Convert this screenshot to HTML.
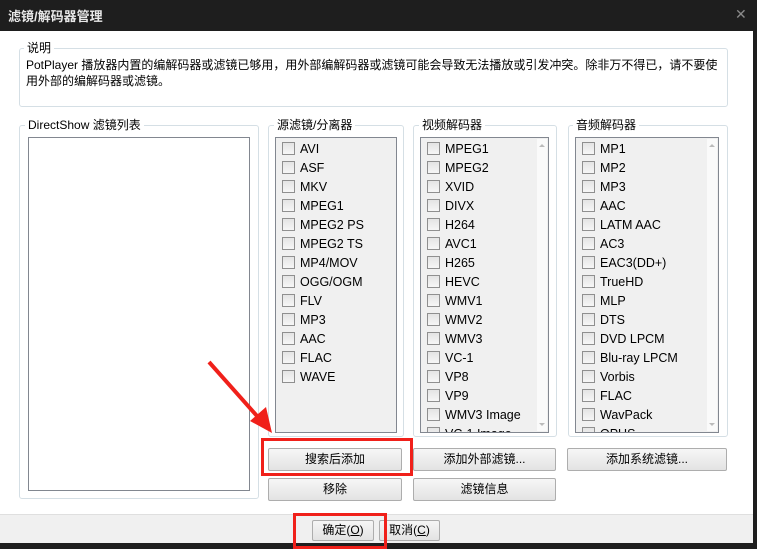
<!DOCTYPE html><html><head><meta charset="utf-8"><style>
*{box-sizing:border-box;margin:0;padding:0}
body{width:757px;height:548px;overflow:hidden;background:#1e1e1e;position:relative;font-family:"Liberation Sans","Noto Sans CJK SC",sans-serif;font-size:12px;color:#000}
.a{position:absolute}
.win{left:0;top:31px;width:753px;height:512px;background:#fff}
.title{left:8px;top:6px;color:#e8e8e8;font-size:13px;font-weight:bold}
.grp{border:1px solid #d5dfe5;border-radius:3px}
.lbl{background:#fff;padding:0 3px;font-size:12px;line-height:14px}
.list{border:1px solid #828790;background:#f0f0f0;overflow:hidden}
.row{position:absolute;left:6px;height:19px;line-height:19px;font-size:12.5px;white-space:nowrap}
.row i{display:inline-block;width:13px;height:13px;border:1px solid #8f8f8f;background:linear-gradient(#e4e4e4,#f6f6f6);vertical-align:-2px;margin-right:5px}
.sb{position:absolute;right:1px;top:1px;width:10px;bottom:1px;background:#fafafa}
.sb b{position:absolute;left:2px;width:0;height:0;border-left:3px solid transparent;border-right:3px solid transparent}
.btn{border:1px solid #adadad;background:linear-gradient(#f6f6f6,#e3e3e3);border-radius:2px;text-align:center;line-height:20px;font-size:12px}
.red{border:3px solid #f0201a}
</style></head><body>
<div class="a title">滤镜/解码器管理</div>
<div class="a" style="left:735px;top:6px;color:#8a8a8a;font-size:14px">✕</div>
<div class="a win"></div>
<div class="a grp" style="left:19px;top:48px;width:709px;height:59px"></div>
<div class="a lbl" style="left:24px;top:41px">说明</div>
<div class="a" style="left:26px;top:57px;line-height:16px;font-size:12px;white-space:nowrap">PotPlayer 播放器内置的编解码器或滤镜已够用，用外部编解码器或滤镜可能会导致无法播放或引发冲突。除非万不得已，请不要使<br>用外部的编解码器或滤镜。</div>

<div class="a grp" style="left:19px;top:125px;width:240px;height:374px"></div>
<div class="a lbl" style="left:25px;top:118px">DirectShow 滤镜列表</div>
<div class="a" style="left:28px;top:137px;width:222px;height:354px;border:1px solid #828790"></div>

<div class="a grp" style="left:268px;top:125px;width:136px;height:312px"></div>
<div class="a lbl" style="left:274px;top:118px">源滤镜/分离器</div>
<div class="a list" style="left:275px;top:137px;width:122px;height:296px">
<div class="row" style="top:2px"><i></i>AVI</div><div class="row" style="top:21px"><i></i>ASF</div><div class="row" style="top:40px"><i></i>MKV</div><div class="row" style="top:59px"><i></i>MPEG1</div><div class="row" style="top:78px"><i></i>MPEG2 PS</div><div class="row" style="top:97px"><i></i>MPEG2 TS</div><div class="row" style="top:116px"><i></i>MP4/MOV</div><div class="row" style="top:135px"><i></i>OGG/OGM</div><div class="row" style="top:154px"><i></i>FLV</div><div class="row" style="top:173px"><i></i>MP3</div><div class="row" style="top:192px"><i></i>AAC</div><div class="row" style="top:211px"><i></i>FLAC</div><div class="row" style="top:230px"><i></i>WAVE</div>
</div>

<div class="a grp" style="left:413px;top:125px;width:144px;height:312px"></div>
<div class="a lbl" style="left:419px;top:118px">视频解码器</div>
<div class="a list" style="left:420px;top:137px;width:129px;height:296px">
<div class="row" style="top:2px"><i></i>MPEG1</div><div class="row" style="top:21px"><i></i>MPEG2</div><div class="row" style="top:40px"><i></i>XVID</div><div class="row" style="top:59px"><i></i>DIVX</div><div class="row" style="top:78px"><i></i>H264</div><div class="row" style="top:97px"><i></i>AVC1</div><div class="row" style="top:116px"><i></i>H265</div><div class="row" style="top:135px"><i></i>HEVC</div><div class="row" style="top:154px"><i></i>WMV1</div><div class="row" style="top:173px"><i></i>WMV2</div><div class="row" style="top:192px"><i></i>WMV3</div><div class="row" style="top:211px"><i></i>VC-1</div><div class="row" style="top:230px"><i></i>VP8</div><div class="row" style="top:249px"><i></i>VP9</div><div class="row" style="top:268px"><i></i>WMV3 Image</div><div class="row" style="top:287px"><i></i>VC-1 Image</div>
<div class="sb"><b style="top:5px;border-bottom:3px solid #bbb"></b><b style="bottom:5px;border-top:3px solid #bbb"></b></div>
</div>

<div class="a grp" style="left:568px;top:125px;width:160px;height:312px"></div>
<div class="a lbl" style="left:573px;top:118px">音频解码器</div>
<div class="a list" style="left:575px;top:137px;width:144px;height:296px">
<div class="row" style="top:2px"><i></i>MP1</div><div class="row" style="top:21px"><i></i>MP2</div><div class="row" style="top:40px"><i></i>MP3</div><div class="row" style="top:59px"><i></i>AAC</div><div class="row" style="top:78px"><i></i>LATM AAC</div><div class="row" style="top:97px"><i></i>AC3</div><div class="row" style="top:116px"><i></i>EAC3(DD+)</div><div class="row" style="top:135px"><i></i>TrueHD</div><div class="row" style="top:154px"><i></i>MLP</div><div class="row" style="top:173px"><i></i>DTS</div><div class="row" style="top:192px"><i></i>DVD LPCM</div><div class="row" style="top:211px"><i></i>Blu-ray LPCM</div><div class="row" style="top:230px"><i></i>Vorbis</div><div class="row" style="top:249px"><i></i>FLAC</div><div class="row" style="top:268px"><i></i>WavPack</div><div class="row" style="top:287px"><i></i>OPUS</div>
<div class="sb"><b style="top:5px;border-bottom:3px solid #bbb"></b><b style="bottom:5px;border-top:3px solid #bbb"></b></div>
</div>

<div class="a btn" style="left:268px;top:448px;width:134px;height:23px">搜索后添加</div>
<div class="a btn" style="left:413px;top:448px;width:143px;height:23px">添加外部滤镜...</div>
<div class="a btn" style="left:567px;top:448px;width:160px;height:23px">添加系统滤镜...</div>
<div class="a btn" style="left:268px;top:478px;width:134px;height:23px">移除</div>
<div class="a btn" style="left:413px;top:478px;width:143px;height:23px">滤镜信息</div>

<div class="a" style="left:0;top:514px;width:753px;height:29px;background:#f0f0f0;border-top:1px solid #dfdfdf"></div>
<div class="a btn" style="left:312px;top:520px;width:62px;height:21px;line-height:19px">确定(<u>O</u>)</div>
<div class="a btn" style="left:379px;top:520px;width:61px;height:21px;line-height:19px">取消(<u>C</u>)</div>

<div class="a red" style="left:261px;top:438px;width:152px;height:38px"></div>
<div class="a red" style="left:293px;top:513px;width:94px;height:36px"></div>
<svg class="a" style="left:200px;top:355px" width="80" height="85"><line x1="9" y1="7" x2="65" y2="70" stroke="#f0201a" stroke-width="4"/><polygon points="72,78 50,66 66,52" fill="#f0201a"/></svg>
</body></html>
